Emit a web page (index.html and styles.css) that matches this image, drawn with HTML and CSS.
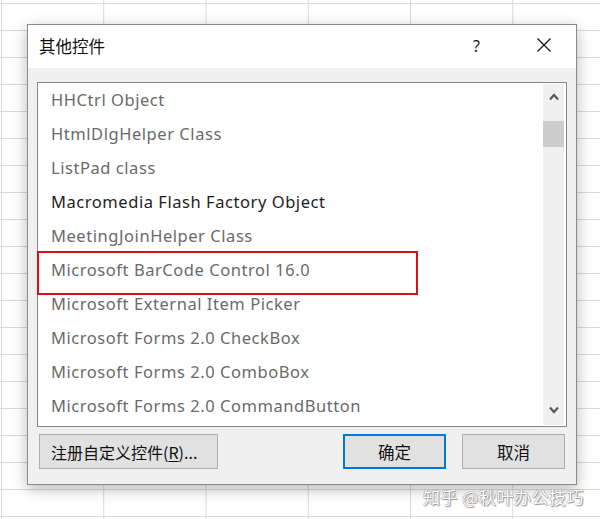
FILE: index.html
```html
<!DOCTYPE html>
<html lang="zh-CN">
<head>
<meta charset="utf-8">
<title>其他控件</title>
<link rel="stylesheet" href="styles.css">
</head>
<body>
<div class="sheet">
  <div class="dialog">
    <div class="titlebar">
      <span class="title">其他控件</span>
      <span class="help">?</span>
      <span class="close">
        <svg width="16" height="16" viewBox="0 0 16 16"><path d="M1.5 1.5 L14.5 14.5 M14.5 1.5 L1.5 14.5" stroke="#1a1a1a" stroke-width="1.3" fill="none"/></svg>
      </span>
    </div>
    <div class="body">
      <div class="listbox">
        <ul class="items">
          <li>HHCtrl Object</li>
          <li>HtmlDlgHelper Class</li>
          <li>ListPad class</li>
          <li class="dark">Macromedia Flash Factory Object</li>
          <li>MeetingJoinHelper Class</li>
          <li>Microsoft BarCode Control 16.0</li>
          <li>Microsoft External Item Picker</li>
          <li>Microsoft Forms 2.0 CheckBox</li>
          <li>Microsoft Forms 2.0 ComboBox</li>
          <li>Microsoft Forms 2.0 CommandButton</li>
        </ul>
        <div class="scrollbar">
          <svg class="arrow up" width="10" height="8" viewBox="0 0 10 8"><path d="M1 6.5 L5 2 L9 6.5" stroke="#5a5a5a" stroke-width="2.2" fill="none"/></svg>
          <div class="thumb"></div>
          <div class="track"></div>
          <svg class="arrow down" width="10" height="8" viewBox="0 0 10 8"><path d="M1 1.5 L5 6 L9 1.5" stroke="#5a5a5a" stroke-width="2.2" fill="none"/></svg>
        </div>
        <div class="highlight"></div>
      </div>
      <div class="buttons">
        <button class="btn reg">注册自定义控件(<u>R</u>)...</button>
        <span class="spacer"></span>
        <button class="btn ok">确定</button>
        <button class="btn">取消</button>
      </div>
    </div>
  </div>
  <div class="watermark">知乎 @秋叶办公技巧</div>
</div>
</body>
</html>
```

FILE: styles.css
```css
html, body {
  margin: 0;
  padding: 0;
}
body {
  width: 600px;
  height: 519px;
  overflow: hidden;
  background-color: #ffffff;
  background-image:
    linear-gradient(to right, #d9d9d9 1px, transparent 1px),
    linear-gradient(to bottom, #d9d9d9 1px, transparent 1px);
  background-size: 102.25px 27px;
  background-position: 1px 3px;
  font-family: "Noto Sans", "Noto Sans CJK SC", sans-serif;
}
.sheet {
  position: relative;
  width: 600px;
  height: 519px;
  padding: 24px 0 0 27px;
  box-sizing: border-box;
}
.dialog {
  width: 550px;
  height: 461px;
  box-sizing: border-box;
  border: 1px solid #8a8a8a;
  background: #f0f0f0;
  box-shadow: 0 4px 14px rgba(0,0,0,0.28);
  display: flex;
  flex-direction: column;
}
.titlebar {
  height: 43px;
  background: #ffffff;
  display: flex;
  align-items: center;
  padding: 0 0 0 11px;
}
.title {
  font-family: "Noto Sans CJK SC", sans-serif;
  font-size: 16.5px;
  color: #111;
  flex: 1;
  margin-top: -2px;
}
.help {
  font-family: "Noto Sans", sans-serif;
  font-size: 16px;
  color: #1a1a1a;
  width: 14px;
  margin-right: 49px;
  margin-top: -2px;
}
.close {
  display: flex;
  width: 16px;
  margin-right: 24px;
  margin-top: -3px;
}
.body {
  flex: 1;
  padding: 14px 9px 0 9px;
  display: flex;
  flex-direction: column;
}
.listbox {
  position: relative;
  height: 345px;
  box-sizing: border-box;
  border: 1px solid #828790;
  background: #ffffff;
  display: flex;
}
.items {
  list-style: none;
  margin: 0;
  padding: 0;
  flex: 1;
}
.items li {
  height: 34px;
  line-height: 34px;
  padding-left: 13px;
  font-size: 16.5px;
  color: #6a6a6a;
  letter-spacing: 0.55px;
  white-space: nowrap;
}
.items li.dark {
  color: #1e1e1e;
}
.scrollbar {
  width: 21px;
  margin: 1px 2px 1px 0;
  background: #f0f0f0;
  display: flex;
  flex-direction: column;
  align-items: center;
}
.arrow.up {
  margin: 9px 0 20px;
}
.thumb {
  width: 21px;
  height: 26px;
  background: #cdcdcd;
}
.track {
  flex: 1;
}
.arrow.down {
  margin: 10px 0 11px;
}
.highlight {
  position: absolute;
  left: -1px;
  top: 168px;
  width: 381px;
  height: 44px;
  box-sizing: border-box;
  border: 2px solid #d4111b;
}
.buttons {
  display: flex;
  margin-top: 7px;
  padding: 0 2px;
  gap: 16px;
}
.spacer {
  flex: 1;
}
.btn {
  height: 35px;
  width: 103px;
  box-sizing: border-box;
  border: 1px solid #adadad;
  background: #e1e1e1;
  font-family: "Noto Sans CJK SC", sans-serif;
  font-size: 16.5px;
  color: #111;
  padding: 0;
}
.btn.reg {
  width: 179px;
  text-align: left;
  padding-left: 11px;
  font-size: 16px;
}
.btn u {
  text-decoration-thickness: 1px;
  text-underline-offset: 2px;
}
.btn.ok {
  border: 2px solid #0078d7;
}
.watermark {
  position: absolute;
  left: 423px;
  top: 484px;
  font-family: "Noto Sans CJK SC", sans-serif;
  font-size: 17px;
  color: #ffffff;
  letter-spacing: 0.5px;
  text-shadow: 0 0 1px #888, 0 0 1px #888, 1px 1px 1px #999;
}
```
